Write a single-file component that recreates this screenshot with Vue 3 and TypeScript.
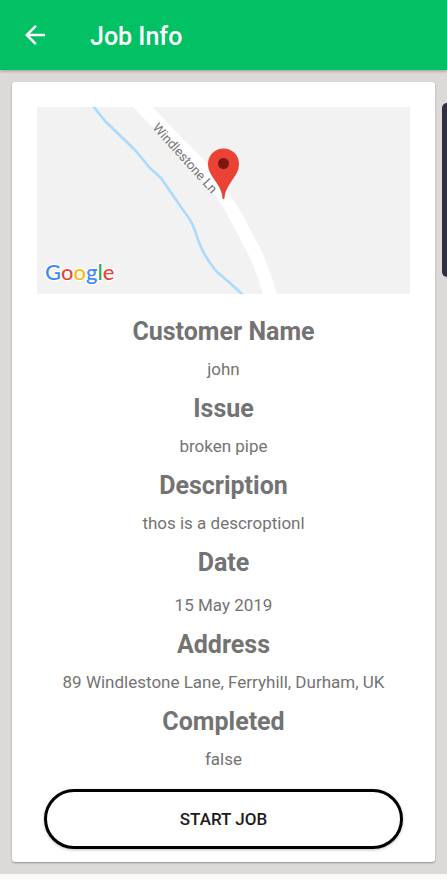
<script setup lang="ts">
interface Field {
  label: string
  value: string
  spaced?: boolean
}

const fields: Field[] = [
  { label: 'Customer Name', value: 'john' },
  { label: 'Issue', value: 'broken pipe' },
  { label: 'Description', value: 'thos is a descroptionl' },
  { label: 'Date', value: '15 May 2019', spaced: true },
  { label: 'Address', value: '89 Windlestone Lane, Ferryhill, Durham, UK' },
  { label: 'Completed', value: 'false' },
]
</script>

<template>
  <div class="screen">
    <header class="bar">
      <button class="back" type="button" aria-label="Back">
        <svg viewBox="0 0 24 24" width="30" height="30" aria-hidden="true">
          <path d="M20 11H7.83l5.59-5.59L12 4l-8 8 8 8 1.41-1.41L7.83 13H20v-2z" fill="#fff" />
        </svg>
      </button>
      <h1 class="title">Job Info</h1>
    </header>

    <main class="content">
      <article class="card">
        <svg class="map" viewBox="0 0 373 187" role="img" aria-label="Map">
          <rect width="373" height="187" fill="#f2f2f2" />
          <path
            d="M56-1L68 14L98 43L113 61L124 71L146 103Q154 113 157 121L163 138Q168 150 179 164L193 176L206 188"
            fill="none" stroke="#abdaff" stroke-width="2.6" stroke-linejoin="round"
          />
          <path
            d="M95-1L143 48L174 83Q183 94 189 105L208 141Q217 156 226 188H240Q233 162 224 143L205 107Q197 93 188 81L165 51L114-1Z"
            fill="#fff"
          />
          <text class="road" transform="translate(115 21) rotate(48)">Windlestone Ln</text>
          <path
            d="M186.500 41.500C177.500 41.500 171 48.500 171 57C171 64 175 69 179 75C183.500 82 185 85 185.500 91C185.600 92.600 187.400 92.600 187.500 91C188 85 189.500 82 194 75C198 69 202 64 202 57C202 48.500 195.500 41.500 186.500 41.500Z"
            fill="#ea4335"
          />
          <circle cx="186.500" cy="56.500" r="5.500" fill="#7b1710" />
          <text class="logo" x="8" y="173">
            <tspan fill="#4285f4">G</tspan><tspan fill="#ea4335">o</tspan><tspan fill="#fbbc05">o</tspan><tspan fill="#4285f4">g</tspan><tspan fill="#34a853">l</tspan><tspan fill="#ea4335">e</tspan>
          </text>
        </svg>

        <dl class="fields">
          <div v-for="field in fields" :key="field.label" class="field" :class="{ spaced: field.spaced }">
            <dt>{{ field.label }}</dt>
            <dd>{{ field.value }}</dd>
          </div>
        </dl>

        <button class="start" type="button">START JOB</button>
      </article>
      <div class="edge-handle"></div>
    </main>
  </div>
</template>

<style>
body {
  margin: 0;
  background: #fbfaf9;
}
</style>

<style scoped>
.screen {
  font-family: Roboto, "Liberation Sans", sans-serif;
  color: #737373;
}

.bar {
  position: relative;
  z-index: 1;
  display: flex;
  align-items: center;
  gap: 40px;
  height: 70px;
  padding: 0 20px;
  background: #02c064;
  box-shadow: 0 1px 3px rgba(0, 0, 0, 0.3);
}

.back {
  display: flex;
  padding: 0;
  border: 0;
  background: none;
}

.title {
  margin: 0;
  padding-top: 4px;
  font-size: 25px;
  line-height: 32px;
  font-weight: 500;
  color: #fff;
}

.content {
  position: relative;
  padding: 12px;
  background: #ded9d9;
}

.card {
  display: flex;
  flex-direction: column;
  padding: 25px 25px 13px;
  border-radius: 3px;
  background: #fff;
  box-shadow: 0 1px 2px rgba(0, 0, 0, 0.35);
}

.map {
  display: block;
  width: 100%;
}

.road {
  font-size: 13px;
  fill: #757575;
}

.logo {
  font-family: Lato, Roboto, sans-serif;
  font-size: 22px;
  font-weight: 500;
  stroke: #fff;
  stroke-width: 3px;
  stroke-linejoin: round;
  paint-order: stroke;
}

.fields {
  margin: 20px 0 18px;
  text-align: center;
}

.field {
  padding-bottom: 10px;
}

.field:last-child {
  padding-bottom: 0;
}

dt {
  font-size: 25px;
  line-height: 36px;
  font-weight: 700;
}

dd {
  margin: 7px 0 0;
  font-size: 17px;
  line-height: 24px;
  font-weight: 400;
}

.spaced dd {
  margin-top: 12px;
}

.start {
  height: 60px;
  margin: 0 7px;
  border: 3px solid #000;
  border-radius: 30px;
  background: #fff;
  box-shadow: 0 1px 3px rgba(0, 0, 0, 0.25);
  font-family: inherit;
  font-size: 17px;
  font-weight: 500;
  color: #1c1c1c;
}

.edge-handle {
  position: absolute;
  top: 33px;
  right: 0;
  width: 5px;
  height: 174px;
  border-radius: 6px 0 0 6px;
  background: #2f2f40;
}
</style>
